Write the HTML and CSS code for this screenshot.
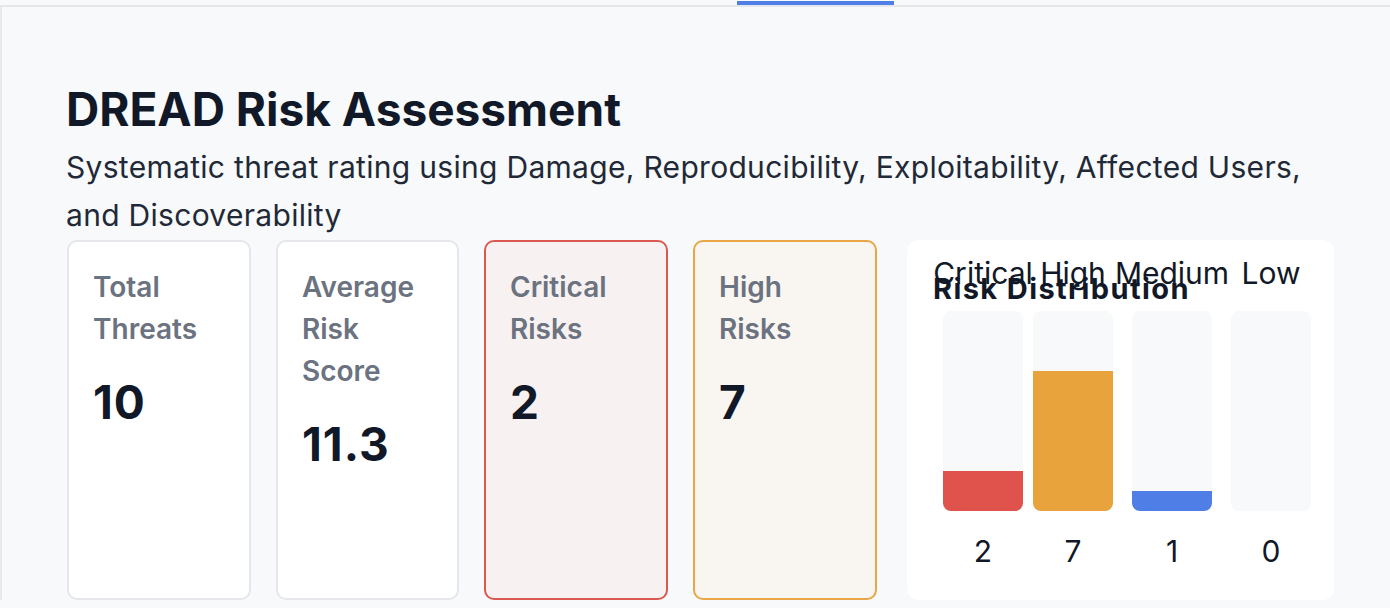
FILE: index.html
```html
<!DOCTYPE html>
<html lang="en">
<head>
<meta charset="utf-8">
<title>DREAD Risk Assessment</title>
<link rel="stylesheet" href="styles.css">
</head>
<body>
<div class="tabbar"><span class="tab-indicator"></span></div>
<main class="main">
  <h1 class="title">DREAD Risk Assessment</h1>
  <p class="subtitle">Systematic threat rating using Damage, Reproducibility, Exploitability, Affected Users, and Discoverability</p>
  <section class="cards">
    <div class="card">
      <div class="card-label">Total Threats</div>
      <div class="card-value">10</div>
    </div>
    <div class="card">
      <div class="card-label">Average Risk Score</div>
      <div class="card-value">11.3</div>
    </div>
    <div class="card card-critical">
      <div class="card-label">Critical Risks</div>
      <div class="card-value">2</div>
    </div>
    <div class="card card-high">
      <div class="card-label">High Risks</div>
      <div class="card-value">7</div>
    </div>
    <div class="dist-card">
      <h3 class="dist-title">Risk Distribution</h3>
      <div class="chart">
        <div class="col">
          <span class="col-label">Critical</span>
          <div class="track"><div class="fill fill-critical" style="height:20%"></div></div>
          <span class="col-value">2</span>
        </div>
        <div class="col">
          <span class="col-label">High</span>
          <div class="track"><div class="fill fill-high" style="height:70%"></div></div>
          <span class="col-value">7</span>
        </div>
        <div class="col">
          <span class="col-label">Medium</span>
          <div class="track"><div class="fill fill-medium" style="height:10%"></div></div>
          <span class="col-value">1</span>
        </div>
        <div class="col">
          <span class="col-label">Low</span>
          <div class="track"><div class="fill fill-low" style="height:0%"></div></div>
          <span class="col-value">0</span>
        </div>
      </div>
    </div>
  </section>
</main>
</body>
</html>
```
FILE: styles.css
```css
* { box-sizing: border-box; }
html, body { margin: 0; padding: 0; }
body {
  background: #f8f9fb;
  font-family: Inter, "Noto Sans", "Liberation Sans", sans-serif;
  color: #111827;
  height: 608px;
  overflow: hidden;
}
.tabbar {
  height: 7px;
  border-bottom: 2px solid #e5e7eb;
  display: flex;
  align-items: flex-end;
  padding-left: 737px;
}
.tab-indicator {
  display: block;
  width: 157px;
  height: 4px;
  background: #4f7fe6;
}
.main {
  border-left: 2px solid #e8eaee;
  padding: 75px 0 0 64px;
  width: 1390px;
}
.title {
  margin: 0;
  font-size: 46px;
  line-height: 54px;
  font-weight: 700;
  color: #111827;
}
.subtitle {
  margin: 8px 0 1px;
  width: 1270px;
  font-size: 30px;
  line-height: 47.6px;
  font-weight: 400;
  letter-spacing: 0.3px;
  color: #1f2937;
}
.cards {
  display: grid;
  grid-template-columns: 184px 183px 184px 184px 432px;
  column-gap: 25px;
  align-items: stretch;
  margin-left: 1px;
}
.card {
  background: #ffffff;
  border: 2px solid #e5e7eb;
  border-radius: 10px;
  padding: 24px 24px;
}
.card-critical { background: #f8f1f1; border-color: #dc5953; }
.card-high { background: #f9f6f1; border-color: #e9a644; }
.card-label {
  font-size: 28px;
  line-height: 42px;
  font-weight: 600;
  color: #6b7280;
}
.card-value {
  margin-top: 25px;
  font-size: 46px;
  line-height: 54px;
  font-weight: 700;
  letter-spacing: 1px;
  color: #111827;
}
.dist-card {
  margin-left: 5px;
  background: #ffffff;
  border-radius: 12px;
  padding: 15px 26px 31px;
  display: grid;
}
.dist-title, .chart { grid-area: 1 / 1; }
.dist-title {
  margin: 17px 0 0;
  font-size: 29px;
  line-height: 34px;
  font-weight: 700;
  letter-spacing: 1.4px;
  color: #111827;
}
.chart {
  display: grid;
  grid-template-columns: 100px 80px 118px 80px;
  align-items: start;
}
.col {
  display: flex;
  flex-direction: column;
  align-items: center;
}
.col-label {
  font-size: 30px;
  line-height: 36px;
  color: #111827;
  white-space: nowrap;
}
.track {
  margin-top: 20px;
  width: 80px;
  height: 200px;
  background: #f8f9fb;
  border-radius: 8px;
  overflow: hidden;
  display: flex;
  flex-direction: column;
  justify-content: flex-end;
}
.fill { width: 100%; }
.fill-critical { background: #df534c; }
.fill-high { background: #e8a33c; }
.fill-medium { background: #4f7fe6; }
.fill-low { background: #9ca3af; }
.col-value {
  margin-top: 22px;
  font-size: 30px;
  line-height: 36px;
  color: #111827;
}
```
